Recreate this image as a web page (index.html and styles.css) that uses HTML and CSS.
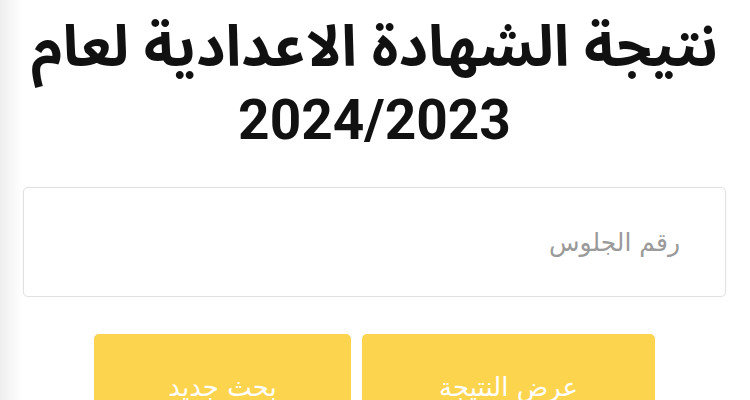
FILE: index.html
```html
<!DOCTYPE html>
<html lang="ar" dir="rtl">
<head>
<meta charset="utf-8">
<title>نتيجة الشهادة الاعدادية</title>
<link rel="stylesheet" href="styles.css">
</head>
<body>
<main class="page">
  <h1 class="title">
    <span class="title-line">نتيجة الشهادة الاعدادية لعام</span>
    <span class="title-line year">2024/2023</span>
  </h1>
  <div class="field">
    <input class="seat-input" type="text" placeholder="رقم الجلوس">
  </div>
  <div class="actions">
    <button class="btn btn-show" type="button">عرض النتيجة</button>
    <button class="btn btn-new" type="button">بحث جديد</button>
  </div>
</main>
</body>
</html>
```

FILE: styles.css
```css
html, body {
  margin: 0;
  padding: 0;
}

body {
  width: 750px;
  height: 400px;
  overflow: hidden;
  background: linear-gradient(to right, #eeeeee 0, #f6f6f6 10px, #ffffff 22px);
  font-family: "Noto Sans Arabic", "DejaVu Sans", sans-serif;
}

.page {
  display: flex;
  flex-direction: column;
  align-items: stretch;
  padding: 8px 24px 0 23px;
}

.title {
  margin: 0;
  display: flex;
  flex-direction: column;
  align-items: center;
  font-weight: 700;
  color: #111111;
}

.title-line {
  display: block;
  font-size: 57px;
  line-height: 80px;
  height: 80px;
  white-space: nowrap;
}

.year {
  font-family: Roboto, "DejaVu Sans", sans-serif;
  font-size: 55px;
  line-height: 60px;
  height: 60px;
  margin-top: 2px;
}

.field {
  margin-top: 37px;
}

.seat-input {
  box-sizing: border-box;
  display: block;
  width: 100%;
  height: 110px;
  border: 1px solid #e2e2e2;
  border-radius: 5px;
  background: #ffffff;
  padding: 0 45px 0 20px;
  font-family: "DejaVu Sans", sans-serif;
  font-size: 25px;
  color: #333333;
  box-shadow: 0 0 2px rgba(0, 0, 0, 0.05);
  outline: none;
}

.seat-input::placeholder {
  color: #9a9a9a;
}

.actions {
  margin-top: 37px;
  display: flex;
  justify-content: center;
  gap: 11px;
}

.btn {
  height: 106px;
  border: none;
  border-radius: 5px;
  background: #fdd44e;
  color: #ffffff;
  font-family: "DejaVu Sans", sans-serif;
  font-size: 26px;
  padding: 0;
}

.btn-show {
  width: 293px;
}

.btn-new {
  width: 257px;
}
```
